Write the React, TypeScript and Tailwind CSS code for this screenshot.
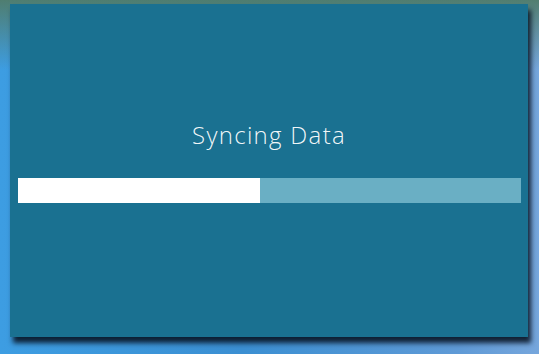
export default function App() {
    const progress = 242 / 503;

    return (
        <div className="w-[539px] h-[354px] overflow-hidden bg-[linear-gradient(180deg,rgba(80,124,106,0.95)_0px,rgba(80,124,106,0)_70px),linear-gradient(90deg,#3d9de2_0%,#3b8fd2_45%,#5f9ad6_85%,#76a6dc_100%)] pt-[4px] pl-[10px]">
            {/* Dialog panel */}
            <div className="w-[518px] h-[333px] bg-[#1a7191] shadow-[3px_6px_5px_rgba(8,20,35,0.9)] flex flex-col items-center pt-[115px] px-[8px] font-['Open_Sans','Noto_Sans',sans-serif]">
                <h1 className="text-[24px] leading-[32px] font-light text-white/95 tracking-[1.3px]">
                    Syncing Data
                </h1>

                {/* Progress bar */}
                <div className="mt-[27px] w-[503px] h-[25px] bg-[#6aafc4] flex">
                    <div className="h-full bg-white" style={{ width: `${progress * 100}%` }} />
                </div>
            </div>
        </div>
    );
}
